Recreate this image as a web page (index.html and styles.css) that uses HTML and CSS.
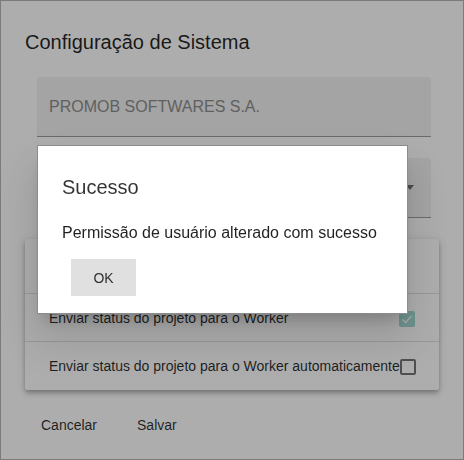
FILE: index.html
```html
<!DOCTYPE html>
<html lang="pt-BR">

<head>
    <meta charset="UTF-8">
    <title>Configuração de Sistema</title>
    <link rel="stylesheet" href="styles.css">
</head>

<body>
    <div class="janela">
        <h1 class="titulo">Configuração de Sistema</h1>

        <div class="campo">
            <span class="valor">PROMOB SOFTWARES S.A.</span>
        </div>
        <div class="campo seletor">
            <span class="valor"></span>
            <span class="seta"></span>
        </div>

        <div class="cartao">
            <!-- Primeira linha, coberta pelo diálogo -->
            <div class="linha primeira"></div>
            <div class="linha">
                <span>Enviar status do projeto para o Worker</span>
                <span class="caixa marcada">
                    <svg width="12" height="12" viewBox="0 0 12 12">
                        <polyline points="1.5,6.5 4.5,9.5 10.5,3" fill="none" stroke="#f4fbfa" stroke-width="1.6"/>
                    </svg>
                </span>
            </div>
            <div class="linha">
                <span class="texto-longo">Enviar status do projeto para o Worker automaticamente</span>
                <span class="caixa"></span>
            </div>
        </div>

        <div class="acoes">
            <button class="botao">Cancelar</button>
            <button class="botao">Salvar</button>
        </div>
    </div>

    <!-- Fundo escuro do diálogo -->
    <div class="fundo"></div>

    <div class="dialogo">
        <h2 class="dialogo-titulo">Sucesso</h2>
        <p class="dialogo-texto">Permissão de usuário alterado com sucesso</p>
        <button class="ok">OK</button>
    </div>
</body>

</html>
```

FILE: styles.css
```css
* {
    box-sizing: border-box;
}

body {
    margin: 0;
    font-family: "Liberation Sans", Arial, sans-serif;
    background: #fff;
}

.janela {
    width: 464px;
    height: 460px;
    border: 1px solid #b5b5b5;
    padding: 25px 24px 0 24px;
    background: #fff;
}

.titulo {
    margin: 0;
    font-size: 20px;
    font-weight: normal;
    line-height: 32px;
    color: rgba(0, 0, 0, 0.87);
}

.campo {
    display: flex;
    align-items: center;
    height: 60px;
    margin: 19px 8px 0 12px;
    padding: 0 12px;
    background: #f2f2f2;
    border-radius: 4px 4px 0 0;
    border-bottom: 1px solid #9c9c9c;
}

.campo .valor {
    flex: 1;
    font-size: 16px;
    color: #8e8e8e;
}

.seletor {
    margin-top: 21px;
}

.seta {
    width: 0;
    height: 0;
    margin-right: 5px;
    border-left: 4px solid transparent;
    border-right: 4px solid transparent;
    border-top: 5px solid rgba(0, 0, 0, 0.54);
}

.cartao {
    margin-top: 21px;
    background: #fff;
    border-radius: 2px;
    box-shadow: 0 2px 4px -1px rgba(0, 0, 0, 0.2), 0 4px 5px 0 rgba(0, 0, 0, 0.14), 0 1px 10px 0 rgba(0, 0, 0, 0.12);
}

.linha {
    display: flex;
    align-items: center;
    justify-content: space-between;
    height: 48px;
    padding: 0 24px;
    font-size: 14px;
    color: rgba(0, 0, 0, 0.84);
    border-bottom: 1px solid #e0e0e0;
}

.linha.primeira {
    height: 55px;
}

.linha:last-child {
    border-bottom: none;
}

.texto-longo {
    white-space: nowrap;
}

.caixa {
    flex: none;
    width: 16px;
    height: 16px;
    margin-top: 2px;
    border: 2px solid rgba(0, 0, 0, 0.54);
    border-radius: 2px;
}

.caixa.marcada {
    display: flex;
    align-items: center;
    justify-content: center;
    border: none;
    background: #a2d9d3;
}

.acoes {
    display: flex;
    gap: 8px;
    margin-top: 17px;
}

.botao {
    height: 36px;
    min-width: 64px;
    padding: 0 16px;
    border: none;
    background: transparent;
    font-family: inherit;
    font-size: 14px;
    color: rgba(0, 0, 0, 0.82);
}

.fundo {
    position: fixed;
    inset: 0;
    background: rgba(0, 0, 0, 0.32);
}

.dialogo {
    position: absolute;
    left: 37px;
    top: 145px;
    width: 371px;
    height: 169px;
    padding: 25px 24px 16px 24px;
    background: #fff;
    border: 1px solid #8c8c8c;
    box-shadow: 0 11px 15px -7px rgba(0, 0, 0, 0.2), 0 24px 38px 3px rgba(0, 0, 0, 0.12);
}

.dialogo-titulo {
    margin: 0 0 18px 0;
    font-size: 20px;
    font-weight: normal;
    line-height: 32px;
    color: rgba(0, 0, 0, 0.8);
}

.dialogo-texto {
    margin: 0;
    font-size: 16px;
    line-height: 24px;
    white-space: nowrap;
    color: rgba(0, 0, 0, 0.87);
}

.ok {
    display: block;
    width: 65px;
    height: 37px;
    margin: 14px 0 0 9px;
    border: none;
    background: #e0e0e0;
    font-family: inherit;
    font-size: 14px;
    color: rgba(0, 0, 0, 0.8);
}
```
